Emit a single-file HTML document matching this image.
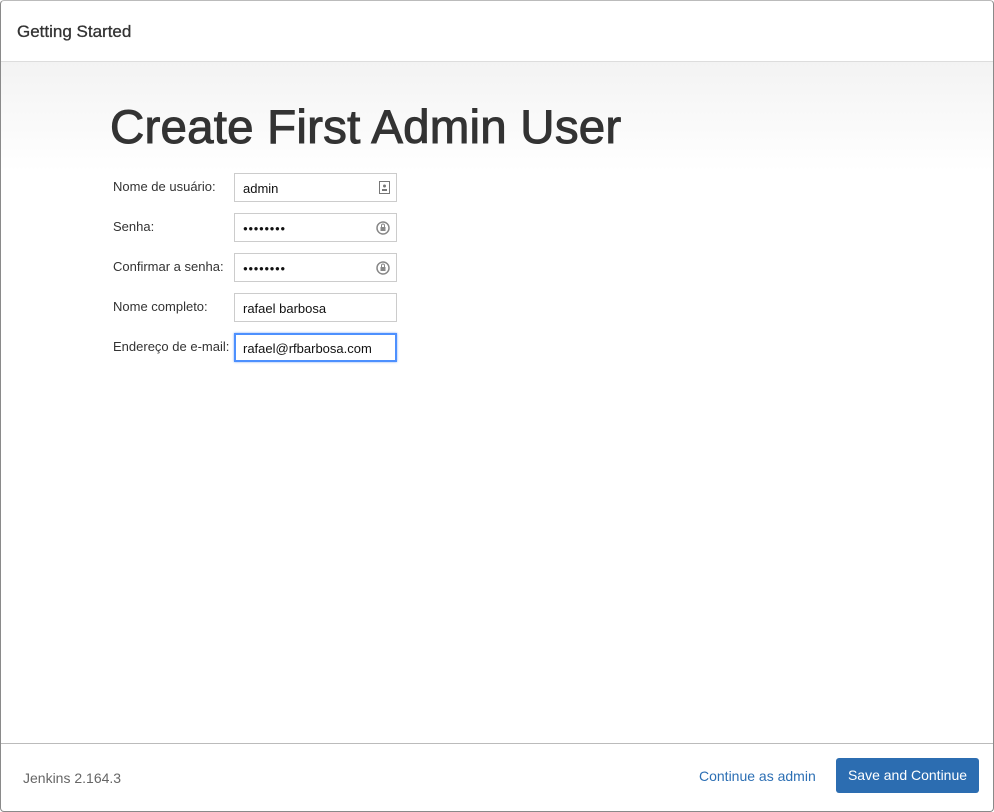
<!DOCTYPE html>
<html><head><style>
*{box-sizing:border-box;margin:0;padding:0}
body{width:994px;height:812px;background:#fff;font-family:"Liberation Sans",Arial,sans-serif;position:relative;overflow:hidden}
.frame{position:absolute;left:0;top:0;width:994px;height:812px;border:1px solid #8a8a8a;border-radius:4px;border-top-color:#bbb}
.hdr{position:absolute;left:1px;top:1px;right:1px;height:61px;border-bottom:1px solid #ddd;background:#fff}
.hdr span{position:absolute;left:16px;top:21px;font-size:17px;color:#333;-webkit-text-stroke:0.3px #333}
.body{position:absolute;left:1px;right:1px;top:62px;height:681px;background:linear-gradient(#f3f3f3 0px,#fff 110px)}
h1{position:absolute;left:110px;top:100px;font-size:47.5px;font-weight:normal;color:#333;letter-spacing:0.2px;-webkit-text-stroke:1px #333}
.lbl{position:absolute;left:113px;font-size:13px;color:#333}
.in{position:absolute;left:234px;width:163px;height:29px;border:1px solid #ccc;background:#fff;font-size:13px;color:#111;padding:7px 8px}
.in.f{border:2px solid #4d90fe;box-shadow:0 0 2px #7aa7f5;padding:6px 7px}
.pw{font-size:8px;letter-spacing:0.5px;padding-top:10px}
.ic{position:absolute;right:6px;top:7px}
.ftr{position:absolute;left:1px;right:1px;top:743px;height:68px;border-top:1px solid #bbb;background:#fff}
.ver{position:absolute;left:22px;top:26px;font-size:14px;color:#666}
.ca{position:absolute;left:698px;top:24px;font-size:14px;color:#2c6fb4}
.btn{position:absolute;left:835px;top:14px;width:143px;height:35px;background:#2c6db1;border-radius:3px;color:#fff;font-size:14px;text-align:center;line-height:35px}
</style></head><body>
<div class="hdr"><span>Getting Started</span></div>
<div class="body"></div>
<h1>Create First Admin User</h1>
<div class="lbl" style="top:179px">Nome de usuário:</div>
<div class="lbl" style="top:219px">Senha:</div>
<div class="lbl" style="top:259px">Confirmar a senha:</div>
<div class="lbl" style="top:299px">Nome completo:</div>
<div class="lbl" style="top:339px">Endereço de e-mail:</div>
<div class="in" style="top:173px">admin<svg class="ic" width="11" height="13" viewBox="0 0 11 13"><rect x="0.5" y="0.5" width="10" height="12" fill="#fff" stroke="#777"/><circle cx="5.5" cy="5" r="1.5" fill="#777"/><rect x="3" y="8" width="5" height="2" fill="#777"/></svg></div>
<div class="in pw" style="top:213px">●●●●●●●●<svg class="ic" width="14" height="14" viewBox="0 0 14 14"><circle cx="7" cy="7" r="6" fill="none" stroke="#888" stroke-width="1.5"/><rect x="4.5" y="6" width="5" height="4" fill="#888"/><path d="M5.5 6V4.5a1.5 1.5 0 0 1 3 0V6" fill="none" stroke="#888"/></svg></div>
<div class="in pw" style="top:253px">●●●●●●●●<svg class="ic" width="14" height="14" viewBox="0 0 14 14"><circle cx="7" cy="7" r="6" fill="none" stroke="#888" stroke-width="1.5"/><rect x="4.5" y="6" width="5" height="4" fill="#888"/><path d="M5.5 6V4.5a1.5 1.5 0 0 1 3 0V6" fill="none" stroke="#888"/></svg></div>
<div class="in" style="top:293px">rafael barbosa</div>
<div class="in f" style="top:333px">rafael@rfbarbosa.com</div>
<div class="ftr"><span class="ver">Jenkins 2.164.3</span><span class="ca">Continue as admin</span><div class="btn">Save and Continue</div></div>
<div class="frame"></div>
</body></html>
